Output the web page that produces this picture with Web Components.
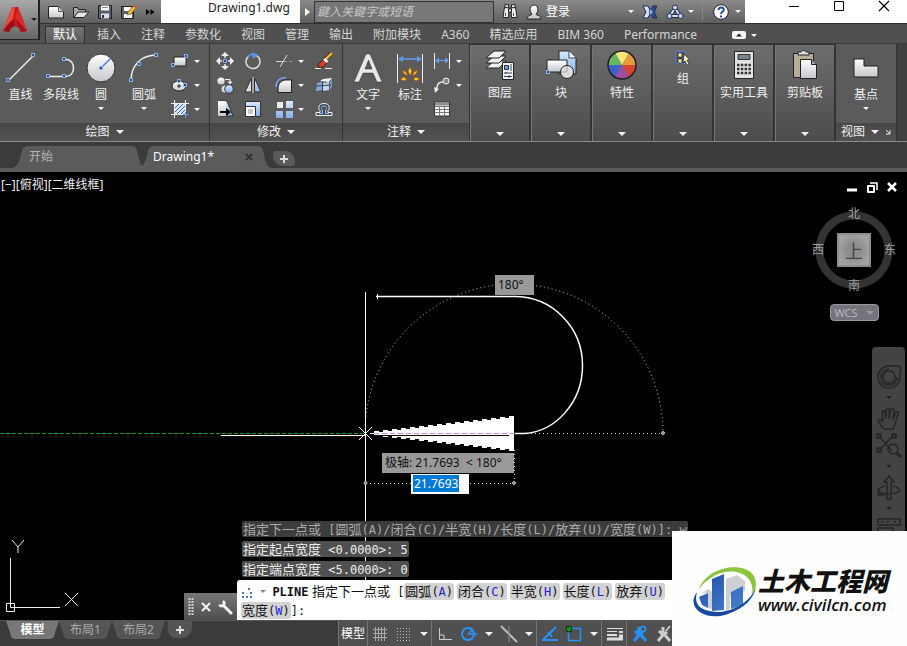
<!DOCTYPE html>
<html lang="zh-CN">
<head>
<meta charset="utf-8">
<title>Drawing1.dwg</title>
<style>
    html {
        height: 100%;
    }

    body {
        margin: 0;
        height: 100%;
        background: #000;
        font: 12px/16px "Noto Sans", "Noto Sans CJK SC", sans-serif;
        color: #e8e8e8;
        overflow: hidden;
    }
</style>
</head>
<body>
<cad-app></cad-app>
<script>
// name: [width, height, markup]
const ICONS = {
    logo: [26, 28, `<path d="M10 1h6l9 24-6 1-2-4-4-2-4 2-2 4-6-1z" fill="#c4161c"/><path d="M10 1h3l-2 12-6 6-4 6z" fill="#ea4b40"/><path d="m1 25 10-12 2 7-4 2-2 4z" fill="#9a1016"/><path d="m16 1 9 24-8-3-4-10z" fill="#dc2a2a"/><path d="m13 12 4 10 2 4 6-1z" fill="#a31218"/>`],
    fileNew: [18, 14, `<path d="M1.500 1.500h10l5 5v6.500h-15z" fill="url(#w)" stroke="#222"/><path d="M11.500 1.500v5h5" fill="#ccc" stroke="#555"/>`],
    open: [18, 14, `<path d="M1.500 12.500v-10h4l1 2h7v3" fill="#aaa" stroke="#222"/><path d="M2 12.500 6 7h11l-5 5.500z" fill="#dde6ef" stroke="#222"/>`],
    save: [16, 16, `<path d="M1.500 1.500h13v13h-13z" fill="#56616e" stroke="#222"/><path d="M4 1.500h8v5H4z" fill="#fff"/><path d="M4 9.500h8v5H4z" fill="#dde"/><path d="M5 11h2v3H5z" fill="#333"/><path d="M5 3.500h6" stroke="#888"/>`],
    saveAs: [18, 16, `<path d="M1.500 2.500h12v12h-12z" fill="#56616e" stroke="#222"/><path d="M4 3h7v4H4zM4 10h8v4H4z" fill="#fff"/><path d="m7 11 1-3 6-7 3 2-6 7z" fill="#f2b632" stroke="#553" stroke-width=".7"/><path d="m14 1 3 2-1 1.500-3-2z" fill="#d55"/>`],
    more: [10, 8, `<path d="M1 1l4 3-4 3zM5.500 1l4 3-4 3z" fill="#000"/>`],
    binocular: [16, 15, `<g fill="#eee" stroke="#222"><path d="M2.500 3 1 13.500h5.500L7 3zM9 3l.500 10.500H15L13.500 3z"/><path d="M3 .7h3.500v3H3zM9.500.7H13v3H9.500zM6.500 5h3v3h-3z"/></g><path d="M3.500 9v3M11.500 9v3" stroke="#555"/>`],
    user: [16, 16, `<path d="M1 15c0-3 2.500-3.500 5-4.500C3 7 3.500 1 8 1s5 6 2 9.500c2.500 1 5 1.500 5 4.500z" fill="url(#w)" stroke="#222"/>`],
    exchange: [16, 14, `<path d="M1 1h5l3 6-3 6H1l3-6z" fill="#d7e3f2" stroke="#1d2b4b"/><path d="M15 1h-4L7 7l4 6h4l-3-6z" fill="#244c9b" stroke="#1d2b4b"/><path d="m9 4 2 3-2 3-2-3z" fill="#7fa7df"/>`],
    a360: [18, 16, `<path d="M9 4 4 12h10z" fill="none" stroke="#1d2b4b" stroke-width="4"/><path d="M9 4 4 12h10z" fill="none" stroke="#dbe6f5" stroke-width="2"/><g fill="#c4d6ee" stroke="#1d2b4b"><circle cx="9" cy="3.500" r="2.500"/><circle cx="3.500" cy="12" r="2.500"/><circle cx="14.500" cy="12" r="2.500"/></g>`],
    help: [16, 16, `<circle cx="8" cy="8" r="7.300" fill="#fff" stroke="#223"/><path d="M5.500 6c0-3.500 5.500-3.300 5.300-.2C10.700 7.800 8 7.800 8 10M8 11.500v2" fill="none" stroke="#1f4f9c" stroke-width="2"/>`],
    minimize: [12, 12, `<path d="M1 6.500h10" stroke="#000"/>`],
    maximize: [12, 12, `<path d="M1.500 1.500h9v9h-9z" fill="none" stroke="#000"/>`],
    close: [12, 12, `<path d="m1 1 10 10M11 1 1 11" stroke="#000" stroke-width="1.200"/>`],
    collapse: [14, 8, `<rect width="14" height="8" rx="2" fill="#f4f4f4"/><path d="m4 5.500 3-3 3 3z" fill="#222"/>`],
    line: [30, 30, `<path d="M2 28 28 2" stroke="#eee" stroke-width="1.500"/>${grip(2, 27)}${grip(27, 2)}`],
    polyline: [32, 24, `<path d="M3 20.500h18c10 0 10-17 0-17h-3" fill="none" stroke="#eee" stroke-width="1.500"/>${grip(3, 20)}${grip(19, 20)}${grip(19, 3)}`],
    circle: [30, 30, `<circle cx="15" cy="15" r="14" fill="url(#w)" stroke="#333"/><path d="m15 15 10-10" stroke="#3d78d8" stroke-width="1.300"/>${grip(15, 15)}`],
    arc: [32, 32, `<path d="M3 29C3 13 13 3 29 3" fill="none" stroke="#eee" stroke-width="1.500"/>${grip(3, 28)}${grip(11, 12)}${grip(28, 3)}`],
    rect: [18, 14, `<path d="M3 3h12v9H3z" fill="url(#w)" stroke="#222"/>${grip(2, 11)}${grip(15, 2)}`],
    ellipse: [18, 14, `<ellipse cx="8" cy="8" rx="7" ry="5" fill="url(#w)" stroke="#222"/>${grip(8, 3)}${grip(14, 7)}<path d="M6 8h4M8 6v4" stroke="#222"/>`],
    hatch: [18, 18, `<path d="M4 4h10v10H4z" fill="#d8e5f5"/><path d="m4 8 4-4M4 12l8-8M6 14l8-8M10 14l4-4" stroke="#3c5f94"/><path d="M3.500 0v18M14.500 0v18M0 3.500h18M0 14.500h18" stroke="#eee"/><path d="M14.500 12v6M12 14.500h6" stroke="#5b9bff"/>`],
    move: [18, 18, `<path d="M9 2v14M2 9h14" stroke="#eee" stroke-width="1.500"/><path d="M9 0l4 4H5zM9 18l4-4H5zM0 9l4-4v8zM18 9l-4-4v8z" fill="#eee"/><path d="M6 6h6v6H6z" fill="#555"/>${grip(9, 9)}`],
    rotate: [18, 18, `<path d="M12.500 3.500A7 7 0 1 1 5 3.800" fill="none" stroke="#ddd" stroke-width="1.500"/><path d="M4 5C5.500 2.500 8 2 10 3" fill="none" stroke="#5b94e8" stroke-width="1.500"/><path d="m8 0 6 3-5 4z" fill="#5b94e8"/>`],
    trim: [18, 14, `<path d="M1 7.500h7" stroke="#ddd"/><path d="M9 7.500h8" stroke="#6ca0ee" stroke-dasharray="3 2"/><path d="M12 1 5 13" stroke="#ddd"/>`],
    erase: [18, 18, `<path d="m17 1-8 8" stroke="#222" stroke-width="4"/><path d="m17 1-8 8" stroke="#f6b33c" stroke-width="2.500"/><path d="m8 8 4 3-4 4-4 .5-1-3z" fill="#d83b2c" stroke="#421"/><path d="m10 6-2 2 3.500 3 2-2z" fill="#eee"/><path d="M0 16.500h6M10 16.500h7" stroke="#eee"/>`],
    copy: [18, 18, `<circle cx="5" cy="5" r="3.600" fill="url(#w)"/><circle cx="9" cy="13" r="3.500" fill="#ddd"/><circle cx="13" cy="13" r="4.300" fill="url(#b)" stroke="#333"/><path d="M9 3.500h5v4" fill="none" stroke="#eee"/><path d="M11.500 5.500h5l-2.500 3z" fill="#eee"/>`],
    mirror: [18, 18, `<path d="M7.500 2v14H1z" fill="#ddd" stroke="#333"/><path d="M10.500 2v14H17z" fill="url(#b)" stroke="#333"/><path d="M9 1v16" stroke="#eee"/>`],
    fillet: [18, 18, `<path d="M3 16.500V12C3 7 7 4 11 4h5.500v12.500z" fill="url(#w)" stroke="#222"/><path d="M1 11C1 5 5 1.500 11 1.500" fill="none" stroke="#75aaff" stroke-width="1.500"/>`],
    explode: [18, 16, `<path d="m2 6 5-1v8l-6 1z" fill="#86a9d8"/><path d="m5 4 3-2 9-1-3 4z" fill="#edf4ff"/><path d="m8 6 6-1v8l-6 1z" fill="#c0d5ee"/><path d="m15 5 2-3v8l-2 3z" fill="#6f97cb"/><path d="M7.500 5v10M1 9l15-1" stroke="#34465e"/>`],
    stretch: [18, 18, `<path d="M3 1h8l6 15H3z" fill="url(#b)" stroke="#333"/><path d="M2 1h8v15H2z" fill="url(#w)"/><path d="M4 12h8" stroke="#000" stroke-width="2"/><path d="m10 8 5 4-5 4z" fill="#000"/>`],
    scale: [18, 18, `<path d="M1.500 1.500h15v15h-15z" fill="url(#b)" stroke="#333"/><path d="M1.500 6.500h10v10h-10z" fill="#fff" stroke="#333"/><path d="M4 9h5v5H4z" fill="#c8c8c8"/>`],
    array: [18, 18, `<path d="M2 2h6v6H2z" fill="#eee"/><path d="M11 1h7v7h-7zM1 11h7v7H1zM11 11h7v7h-7z" fill="url(#b)"/>`],
    offset: [18, 16, `<path d="M1 14.500h16v-3h-4v-2c2-2 2-7-4-7s-6 5-4 7v2H1z" fill="#47505c" stroke="#edf3ff"/><path d="M4 12.500h3.500V9C6 8 6 5 9 5s3 3 1.500 4v3.500H14" fill="none" stroke="#8db9f8"/>`],
    text: [28, 30, `<path d="M0 29 12 1h4l12 28h-5l-4-9H9l-4 9zm11-13h7L14.500 7z" fill="#e8e8e8" stroke="#333" stroke-width=".5"/>`],
    dimension: [28, 30, `<path d="M1.500 1v29M26.500 1v29" stroke="#eee"/><path d="M3 6h22" stroke="#5f9cf0" stroke-width="1.500"/><path d="m2 6 5-3v6zM26 6l-5-3v6z" fill="#5f9cf0"/><g fill="#f8c829" stroke="#a8400c" stroke-width=".6"><path d="m14 14 2 4-2 5-2-5zM6 17l4 2 2 4-4-2zM22 17l-4 2-2 4 4-2zM4 26l4-2 3 2-3 2zM24 26l-4-2-3 2 3 2z"/></g>`],
    linearDim: [18, 16, `<path d="M1.500 0v16M16.500 0v16" stroke="#eee"/><path d="M3 7.500h12" stroke="#65a0f5"/><path d="m2 7.500 4-3v6zM16 7.500l-4-3v6z" fill="#65a0f5"/>`],
    leader: [18, 16, `<circle cx="13" cy="4" r="3" fill="#888" stroke="#eee"/><path d="M10 5C5 5 5 7 3 13" fill="none" stroke="#eee" stroke-width="1.500"/><path d="M1 10l1 6 4-4z" fill="#eee"/>`],
    table: [16, 16, `<path d="M.5 1h15v14H.5z" fill="#f4f4f4" stroke="#333"/><path d="M1 1.500h14v3H1z" fill="#8f8f8f"/><path d="M.5 5.500h15M.5 8.500h15M.5 11.500h15M5.500 5v10M10.500 5v10" stroke="#777"/>`],
    layers: [30, 30, `<g fill="#f2f2f2" stroke="#222"><path d="m1 18 8-7h12l-7 7z"/><path d="m1 13 8-7h12l-7 7z"/><path d="m1 8 8-7h12l-7 7z"/></g><path d="M17.500 12.500h11v17h-11z" fill="#f4f4f4" stroke="#222"/><path d="M19.500 15.500h4v4h-4z" fill="#69a0ee" stroke="#234"/><path d="M26 14v7M19 23h8M19 26.500h8M21 22v2M24 25v3" stroke="#345"/>`],
    block: [32, 30, `<path d="M14 1h10l7 7v16H14z" fill="url(#b)" stroke="#222"/><path d="M24 1v7h7" fill="#fff" stroke="#246"/><path d="M2 10h20v12H2z" fill="url(#w)" stroke="#222"/><circle cx="22" cy="22" r="6.500" fill="#ddd" stroke="#222"/><path d="M22 16v6h-6" fill="none" stroke="#aaa"/>${grip(3, 22)}`],
    properties: [30, 30, `<g transform="translate(15 15)"><path d="M0 0-7-12A14 14 0 0 1 7-12z" fill="#f5e77c"/><path d="M0 0 7-12A14 14 0 0 1 14 0z" fill="#e79a3a"/><path d="M0 0H14A14 14 0 0 1 7 12z" fill="#d64436"/><path d="M0 0 7 12A14 14 0 0 1-7 12z" fill="#9c4fa2"/><path d="M0 0-7 12A14 14 0 0 1-14 0z" fill="#3f62c9"/><path d="M0 0H-14A14 14 0 0 1-7-12z" fill="#67b862"/><circle r="14" fill="none" stroke="#222" stroke-width="1.500"/></g>`],
    group: [16, 16, `<path d="M1 1.500h9v12H1z" fill="#454c66" stroke="#5b8cff" stroke-dasharray="2 1"/><path d="M3 3h4v4H3zM3 9h4v4H3z" fill="#e7e98c" stroke="#333" stroke-width=".7"/><path d="m9 4 6 6h-3l2 4-2 1-2-4-2 2z" fill="#f5f5c8" stroke="#222" stroke-width=".7"/>`],
    calculator: [22, 30, `<path d="M1.500 1.500h19v27h-19z" fill="#e3e3e3" stroke="#222"/><path d="M5 4.500h12v5H5z" fill="#7a8590" stroke="#333"/><path d="M4 15h14M4 19h14M4 23h14" stroke="#333" stroke-width="2.500" stroke-dasharray="2.500 1.300"/>`],
    clipboard: [26, 30, `<path d="M1.500 3.500h20v24h-20z" fill="#b9ad98" stroke="#222"/><path d="M6 5V2h3c1-2 4-2 5 0h3v3z" fill="#ddd" stroke="#222"/><path d="M8.500 9.500h11l5 5v14h-16z" fill="url(#w)" stroke="#222"/><path d="M19.500 9.500v5h5" fill="#aaa" stroke="#222"/>`],
    base: [26, 20, `<path d="M1 1h10v7h14v11H1z" fill="url(#w)" stroke="#222"/>`],
    launcher: [6, 6, `<path d="m1 1 4 4M5 1v4H1" fill="none" stroke="#eee"/>`],
    tabClose: [8, 8, `<path d="m1 1 6 6M7 1 1 7" stroke="#333" stroke-width="2"/>`],
    plus: [8, 8, `<path d="M4 0v8M0 4h8" stroke="#ddd" stroke-width="2"/>`],
    winMin: [12, 12, `<path d="M1 9h10" stroke="#fff" stroke-width="3"/>`],
    winRestore: [12, 12, `<path d="M4 2h7v7" fill="none" stroke="#fff" stroke-width="1.500"/><path d="M2 5h6v6H2z" fill="none" stroke="#fff" stroke-width="2"/>`],
    winClose: [12, 12, `<path d="m2 2 8 8M10 2l-8 8" stroke="#fff" stroke-width="2.500"/>`],
    wheel: [26, 26, `<circle cx="13" cy="13" r="6"/><path d="M13 2h9c3 0 3 3 2 6v5a11 11 0 1 1-11-11z"/><path d="M13 5a8 8 0 1 0 8 8"/>`],
    hand: [26, 26, `<path d="M8 23c-2-4-6-6-6-9 2-2 4 1 5 2L6 6c1-2 3-1 3 1l1 5V4c1-2 3-2 3 0v8l2-9c1-1 3-1 3 1l-1 9 3-7c2-1 3 0 2 2l-3 10-2 5z"/>`],
    zoom: [26, 26, `<path d="m3 3 13 15M18 2 3 17M1 1h4v4H1zM16 1h4v4h-4zM1 15h4v4H1z"/><circle cx="17" cy="16" r="5"/><path d="m21 20 4 4" stroke-width="3"/>`],
    orbit: [26, 26, `<path d="M11 24V7H8l5-6 5 6h-3v17zM9 11C-2 14 0 19 12 19s16-5 5-8M4 15l-2 5 6 0"/>`],
    motion: [26, 16, `<path d="M2 2h22v6H2zM5 5h2M11 5h2M18 5h2M2 16v-5h15v5"/>`],
    drag: [6, 18, `<path d="M1.500 0v18M4.500 0v18" stroke="#ccc" stroke-width="2" stroke-dasharray="2 1"/>`],
    cmdClose: [12, 12, `<path d="m2 2 8 8M10 2l-8 8" stroke="#f4f4f4" stroke-width="2"/>`],
    wrench: [16, 16, `<path d="m6 6 8 8" stroke="#f4f4f4" stroke-width="3" stroke-linecap="round"/><path d="M2 6c4 3 7-1 4-4" fill="none" stroke="#f4f4f4" stroke-width="2.500"/>`],
    prompt: [12, 12, `<path d="M7 1h2v2H7zM1 5h2v2H1zM9 5h2v2H9zM1 9h2v2H1zM5 9h2v2H5zM9 9h2v2H9z" fill="#4c74ae"/>`],
    grid: [16, 16, `<path d="M3.500 1v14M6.500 1v14M9.500 1v14M12.500 1v14M1 3.500h14M1 7.500h14M1 11.500h14" stroke="#aaa"/>`],
    snap: [16, 16, `<path d="M1 2.500h14M1 5.500h14M1 8.500h14M1 11.500h14M1 14.500h14" stroke="#bbb" stroke-dasharray="1 2"/>`],
    ortho: [16, 16, `<path d="M2.500 2v11.500H15M3 9h4v4" fill="none" stroke="#ccc"/>`],
    polar: [18, 16, `<circle cx="8" cy="8" r="6" fill="none" stroke="#2793ff" stroke-width="2"/><path d="M8 8h9M8 8l4-4" stroke="#2793ff" stroke-width="1.500"/>`],
    iso: [18, 18, `<path d="M1 1 17 17" stroke="#bbb" stroke-width="2"/><path d="M9 1v16" stroke="#888"/>`],
    track: [18, 16, `<path d="M15 1 2 14h15" fill="none" stroke="#2793ff" stroke-width="2"/><path d="M7 6l4 5" stroke="#2793ff" stroke-width="2"/>`],
    osnap: [18, 18, `<path d="M3.500 3.500h12v12h-12z" fill="none" stroke="#2793ff" stroke-width="1.500"/><circle cx="4" cy="4" r="3" fill="#128b22" stroke="#082d0c"/>`],
    weight: [18, 14, `<path d="M1 1.500h16M1 4.500h10" stroke="#ddd"/><path d="M13 5h4M1 8h10" stroke="#ddd" stroke-width="2"/><path d="M13 9h4M1 12h16" stroke="#ddd" stroke-width="3"/>`],
    annoOn: [16, 18, `<path d="M7 2v8l-5 6M8 9l6 7M3 6l4 4 4-3" fill="none" stroke="#2793ff" stroke-width="3"/><circle cx="11" cy="4" r="2.500" fill="none" stroke="#2793ff" stroke-width="1.500"/>`],
    annoOff: [16, 18, `<path d="M7 2v8l-5 6M8 9l6 7M3 6l4 4 4-3" fill="none" stroke="#ccc" stroke-width="3"/><path d="m10 6 4-5" stroke="#ccc" stroke-width="2"/>`]
};

// the small square grip that marks a point
function grip(x, y) {
    return `<rect x="${x - 1.5}" y="${y - 1.5}" width="3" height="3" fill="#334a70" stroke="#8db8ff"/>`;
}

class CadIcon extends HTMLElement {
    constructor() {
        super();
        this.attachShadow({ mode: 'open' });
    }

    connectedCallback() {
        const [w, h, markup] = ICONS[this.getAttribute('name')];
        this.shadowRoot.innerHTML = `
        <style>
            :host {
                display: inline-flex;
                flex: none;
            }
        </style>
        <svg width="${w}" height="${h}" viewBox="0 0 ${w} ${h}" aria-hidden="true" fill="none" stroke-linejoin="round">
            <defs>
                <linearGradient id="w" x2="0" y2="1"><stop stop-color="#fff"/><stop offset="1" stop-color="#c4c7cc"/></linearGradient>
                <linearGradient id="b" x2="0" y2="1"><stop stop-color="#d9eaff"/><stop offset="1" stop-color="#83aee6"/></linearGradient>
            </defs>
            ${markup}
        </svg>`;
    }
}
customElements.define('cad-icon', CadIcon);

class DropArrow extends HTMLElement {
    constructor() {
        super();
        this.attachShadow({ mode: 'open' }).innerHTML = `
        <style>
            :host {
                display: inline-block;
                flex: none;
                width: 0;
                border: solid transparent;
                border-width: 3px 3px 0;
                border-top-color: var(--arrow, #f4f4f4);
            }
            :host([large]) {
                border-width: 4px 4px 0;
            }
        </style>`;
    }
}
customElements.define('drop-arrow', DropArrow);

// tool in a ribbon panel: large with a label, or small with an optional arrow
class ToolButton extends HTMLElement {
    constructor() {
        super();
        this.attachShadow({ mode: 'open' });
    }

    connectedCallback() {
        const label = this.getAttribute('label');
        const small = this.hasAttribute('small');
        this.shadowRoot.innerHTML = `
        <style>
            :host {
                display: flex;
                justify-content: center;
            }
            button {
                display: flex;
                align-items: center;
                border: 0;
                padding: 0;
                background: none;
                color: #f0f0f0;
                font: inherit;
                white-space: nowrap;
            }
            .large {
                flex-direction: column;
            }
            .large .icon {
                height: 38px;
            }
            .large drop-arrow {
                margin-top: 4px;
            }
            .small {
                height: 24px;
            }
            .icon {
                display: flex;
                align-items: center;
                justify-content: center;
                min-width: 22px;
            }
            .arrow {
                display: flex;
                justify-content: center;
                width: 12px;
            }
        </style>
        <button type="button" class="${small ? 'small' : 'large'}" ${small ? `aria-label="${label}"` : ''}>
            <span class="icon"><cad-icon name="${this.getAttribute('icon')}"></cad-icon></span>
            ${small ? '' : `<span>${label}</span>`}
            ${this.hasAttribute('drop') ? '<span class="arrow"><drop-arrow></drop-arrow></span>' : ''}
        </button>`;
    }
}
customElements.define('tool-button', ToolButton);

class RibbonPanel extends HTMLElement {
    constructor() {
        super();
        this.attachShadow({ mode: 'open' });
    }

    connectedCallback() {
        this.shadowRoot.innerHTML = `
        <style>
            :host {
                display: flex;
                flex-direction: column;
                box-sizing: border-box;
                border-right: 1px solid #333;
                background: #5b5b5b;
            }
            .tools {
                flex: 1;
                display: grid;
                grid-template-columns: var(--columns);
                align-content: start;
                padding: 5px 0 0;
            }
            button {
                display: flex;
                align-items: center;
                justify-content: center;
                gap: 6px;
                height: 18px;
                border: 0;
                padding: 0;
                background: linear-gradient(#474747, #525252);
                color: #f0f0f0;
                font: inherit;
            }
        </style>
        <div class="tools"><slot></slot></div>
        <button type="button">${this.getAttribute('label')} <drop-arrow large></drop-arrow>
            ${this.hasAttribute('launcher') ? '<cad-icon name="launcher"></cad-icon>' : ''}
        </button>`;
    }
}
customElements.define('ribbon-panel', RibbonPanel);

// panel folded to a single button
class FoldedPanel extends HTMLElement {
    constructor() {
        super();
        this.attachShadow({ mode: 'open' });
    }

    connectedCallback() {
        this.shadowRoot.innerHTML = `
        <style>
            :host {
                display: flex;
                width: 61px;
                box-sizing: border-box;
                border: solid #333;
                border-width: 1px 2px 0 0;
            }
            button {
                flex: 1;
                display: flex;
                flex-direction: column;
                align-items: center;
                gap: 5px;
                border: 1px solid #777;
                border-width: 0 0 0 1px;
                padding: 5px 0;
                background: linear-gradient(#6d6d6d, #4c4c4c);
                color: #f0f0f0;
                font: inherit;
                white-space: nowrap;
            }
            drop-arrow {
                margin-top: auto;
            }
        </style>
        <button type="button">
            <cad-icon name="${this.getAttribute('icon')}"></cad-icon>
            <span>${this.getAttribute('label')}</span>
            <drop-arrow large></drop-arrow>
        </button>`;
    }
}
customElements.define('folded-panel', FoldedPanel);

class TitleBar extends HTMLElement {
    constructor() {
        super();
        this.attachShadow({ mode: 'open' }).innerHTML = `
        <style>
            :host {
                display: flex;
                height: 23px;
                background: #fff;
            }
            button {
                display: flex;
                align-items: center;
                gap: 4px;
                border: 0;
                padding: 0;
                background: none;
                font: inherit;
                color: #fff;
            }
            .quick, .info {
                display: flex;
                align-items: center;
                background: linear-gradient(#8a8a8a, #5f5f5f);
            }
            .quick {
                flex: none;
                gap: 7px;
                width: 114px;
                padding-left: 7px;
            }
            .title {
                flex: none;
                width: 92px;
                padding-left: 47px;
                color: #222;
                white-space: nowrap;
            }
            .info {
                flex: 1;
                min-width: 0;
                gap: 8px;
            }
            .play {
                width: 14px;
                justify-content: center;
            }
            .play::before {
                content: "";
                border: solid transparent;
                border-width: 4px 0 4px 5px;
                border-left-color: #fff;
            }
            .play + input {
                margin-left: -8px;
            }
            input {
                flex: 1;
                min-width: 0;
                height: 22px;
                box-sizing: border-box;
                border: 1px solid #333;
                padding: 0 2px;
                background: #777;
                font: italic 12px/16px "Noto Sans", "Noto Sans CJK SC", sans-serif;
            }
            input::placeholder {
                color: #c8c8c8;
            }
            .login {
                width: 108px;
            }
            .login drop-arrow {
                margin-left: auto;
            }
            .help {
                border-left: 1px solid #888;
                padding: 0 4px 0 10px;
                gap: 6px;
            }
            .window {
                flex: none;
                display: flex;
                align-items: start;
                gap: 33px;
                width: 119px;
                padding-left: 43px;
            }
        </style>
        <div class="quick">
            <button aria-label="新建"><cad-icon name="fileNew"></cad-icon></button>
            <button aria-label="打开"><cad-icon name="open"></cad-icon></button>
            <button aria-label="保存"><cad-icon name="save"></cad-icon></button>
            <button aria-label="另存为"><cad-icon name="saveAs"></cad-icon></button>
            <button aria-label="更多"><cad-icon name="more"></cad-icon></button>
        </div>
        <div class="title">Drawing1.dwg</div>
        <div class="info">
            <button class="play" aria-label="搜索历史"></button>
            <input type="search" placeholder="鍵入关鍵字或短语" aria-label="搜索">
            <button aria-label="搜索"><cad-icon name="binocular"></cad-icon></button>
            <button class="login"><cad-icon name="user"></cad-icon> 登录 <drop-arrow></drop-arrow></button>
            <button aria-label="Exchange"><cad-icon name="exchange"></cad-icon></button>
            <button aria-label="A360"><cad-icon name="a360"></cad-icon><drop-arrow></drop-arrow></button>
            <button class="help" aria-label="帮助"><cad-icon name="help"></cad-icon><drop-arrow></drop-arrow></button>
        </div>
        <div class="window">
            <button aria-label="最小化"><cad-icon name="minimize"></cad-icon></button>
            <button aria-label="最大化"><cad-icon name="maximize"></cad-icon></button>
            <button aria-label="关闭"><cad-icon name="close"></cad-icon></button>
        </div>`;
    }
}
customElements.define('title-bar', TitleBar);

class RibbonTabs extends HTMLElement {
    constructor() {
        super();
        const tabs = ['默认', '插入', '注释', '参数化', '视图', '管理', '输出', '附加模块', 'A360', '精选应用', 'BIM 360', 'Performance'];
        this.attachShadow({ mode: 'open' }).innerHTML = `
        <style>
            :host {
                display: flex;
                gap: 4px;
                height: 20px;
                box-sizing: border-box;
                padding: 2px 0 0 5px;
                border-top: 1px solid #333;
                background: #505050;
            }
            button {
                flex: none;
                border: 1px solid transparent;
                border-bottom: 0;
                padding: 0 7px;
                background: none;
                color: #d4d4d4;
                font: inherit;
                white-space: nowrap;
            }
            button[aria-selected=true] {
                border-color: #2c2c2c;
                background: linear-gradient(#747474, #5b5b5b);
                color: #fff;
            }
            .view {
                display: flex;
                align-items: center;
                gap: 5px;
                padding: 0 22px;
            }
        </style>
        ${tabs.map((t, i) => `<button role="tab" aria-selected="${i === 0}">${t}</button>`).join('')}
        <button class="view" aria-label="最小化功能区"><cad-icon name="collapse"></cad-icon><drop-arrow></drop-arrow></button>`;
    }
}
customElements.define('ribbon-tabs', RibbonTabs);

class CadRibbon extends HTMLElement {
    constructor() {
        super();
        this.attachShadow({ mode: 'open' }).innerHTML = `
        <style>
            :host {
                display: flex;
                height: 98px;
                background: #404040;
                border-top: 1px solid #3a3a3a;
                box-sizing: border-box;
            }
            ribbon-panel {
                flex: none;
            }
            .draw {
                width: 210px;
                --columns: 41px 40px 40px 46px 34px;
            }
            .modify {
                width: 133px;
                --columns: 29px 28px 46px 22px;
            }
            .note {
                width: 127px;
                --columns: 50px 34px 39px;
            }
            .base {
                width: 61px;
                --columns: 1fr;
            }
            .stack {
                display: grid;
                justify-items: start;
            }
            .draw .stack {
                padding-left: 2px;
            }
            .note .stack {
                padding-left: 4px;
            }
        </style>
        <ribbon-panel class="draw" label="绘图">
            <tool-button icon="line" label="直线"></tool-button>
            <tool-button icon="polyline" label="多段线"></tool-button>
            <tool-button icon="circle" label="圆" drop></tool-button>
            <tool-button icon="arc" label="圆弧" drop></tool-button>
            <div class="stack">
                <tool-button small icon="rect" label="矩形" drop></tool-button>
                <tool-button small icon="ellipse" label="椭圆" drop></tool-button>
                <tool-button small icon="hatch" label="图案填充" drop></tool-button>
            </div>
        </ribbon-panel>
        <ribbon-panel class="modify" label="修改">
            <tool-button small icon="move" label="移动"></tool-button>
            <tool-button small icon="rotate" label="旋转"></tool-button>
            <tool-button small icon="trim" label="修剪" drop></tool-button>
            <tool-button small icon="erase" label="删除"></tool-button>
            <tool-button small icon="copy" label="复制"></tool-button>
            <tool-button small icon="mirror" label="镜像"></tool-button>
            <tool-button small icon="fillet" label="圆角" drop></tool-button>
            <tool-button small icon="explode" label="分解"></tool-button>
            <tool-button small icon="stretch" label="拉伸"></tool-button>
            <tool-button small icon="scale" label="缩放"></tool-button>
            <tool-button small icon="array" label="阵列" drop></tool-button>
            <tool-button small icon="offset" label="偏移"></tool-button>
        </ribbon-panel>
        <ribbon-panel class="note" label="注释">
            <tool-button icon="text" label="文字" drop></tool-button>
            <tool-button icon="dimension" label="标注"></tool-button>
            <div class="stack">
                <tool-button small icon="linearDim" label="线性" drop></tool-button>
                <tool-button small icon="leader" label="引线" drop></tool-button>
                <tool-button small icon="table" label="表格"></tool-button>
            </div>
        </ribbon-panel>
        <folded-panel icon="layers" label="图层"></folded-panel>
        <folded-panel icon="block" label="块"></folded-panel>
        <folded-panel icon="properties" label="特性"></folded-panel>
        <folded-panel icon="group" label="组"></folded-panel>
        <folded-panel icon="calculator" label="实用工具"></folded-panel>
        <folded-panel icon="clipboard" label="剪贴板"></folded-panel>
        <ribbon-panel class="base" label="视图" launcher>
            <tool-button icon="base" label="基点" drop></tool-button>
        </ribbon-panel>`;
    }
}
customElements.define('cad-ribbon', CadRibbon);

class FileTabs extends HTMLElement {
    constructor() {
        super();
        const shape = (fill) => `<svg viewBox="0 0 130 23" preserveAspectRatio="none" aria-hidden="true">
            <defs><linearGradient id="g" x2="0" y2="1"><stop stop-color="${fill}"/><stop offset="1" stop-color="#5b5b5b"/></linearGradient></defs>
            <path d="M0 23c5-2 6-6 8-14 1-7 3-9 7-9h101c5 0 6 3 7 9 2 8 2 12 7 14z" fill="url(#g)"/></svg>`;
        this.attachShadow({ mode: 'open' }).innerHTML = `
        <style>
            :host {
                display: flex;
                align-items: end;
                height: 31px;
                box-sizing: border-box;
                padding: 0 0 0 13px;
                border-top: 1px solid #8a8a8a;
                border-bottom: 4px solid #5b5b5b;
                background: #3b3b3b;
            }
            button {
                position: relative;
                display: flex;
                align-items: center;
                height: 22px;
                width: 132px;
                border: 0;
                padding: 0 18px 0 16px;
                margin-right: -6px;
                background: none;
                color: #b4b4b4;
                font: inherit;
            }
            button[aria-selected=true] {
                color: #fff;
                padding-left: 14px;
            }
            svg {
                position: absolute;
                inset: 0;
                width: 100%;
                height: 100%;
            }
            span, button > cad-icon {
                position: relative;
            }
            button > cad-icon {
                margin-left: auto;
            }
            .add {
                justify-content: center;
                width: 22px;
                height: 15px;
                padding: 0;
                margin: 0 0 2px 8px;
                border-radius: 3px 10px 3px 10px;
                background: #5a5a5a;
            }
            .add > cad-icon {
                margin: 0;
            }
        </style>
        <button role="tab" aria-selected="false">${shape('#5b5b5b')}<span>开始</span></button>
        <button role="tab" aria-selected="true">${shape('#7c7c7c')}<span>Drawing1*</span><cad-icon name="tabClose"></cad-icon></button>
        <button class="add" aria-label="新图形"><cad-icon name="plus"></cad-icon></button>`;
    }
}
customElements.define('file-tabs', FileTabs);

class ViewCube extends HTMLElement {
    constructor() {
        super();
        this.attachShadow({ mode: 'open' }).innerHTML = `
        <style>
            :host {
                display: grid;
                grid-template: 18px 54px 18px / 18px 54px 18px;
                place-items: center;
                color: #a0a0a0;
                background: radial-gradient(circle, transparent 30px, #333 31px, #333 38px, transparent 39px);
            }
            .n { grid-area: 1 / 2; }
            .w { grid-area: 2 / 1; }
            .e { grid-area: 2 / 3; }
            .s { grid-area: 3 / 2; }
            button {
                grid-area: 2 / 2;
                width: 34px;
                height: 34px;
                border: 2px solid #8e8e8e;
                padding: 0;
                background: radial-gradient(#8c8c8c 30%, #a2a2a2 75%);
                color: #444;
                font: 18px/28px "Noto Sans CJK SC", sans-serif;
            }
        </style>
        <span class="n">北</span>
        <span class="w">西</span>
        <button>上</button>
        <span class="e">东</span>
        <span class="s">南</span>`;
    }
}
customElements.define('view-cube', ViewCube);

class NavBar extends HTMLElement {
    constructor() {
        super();
        this.attachShadow({ mode: 'open' }).innerHTML = `
        <style>
            :host {
                display: flex;
                flex-direction: column;
                width: 33px;
                box-sizing: border-box;
                border-radius: 4px 4px 0 0;
                padding-top: 17px;
                background: #434343;
                --arrow: #222;
            }
            button {
                display: flex;
                flex-direction: column;
                align-items: center;
                gap: 6px;
                border: 0;
                padding: 0 0 7px;
                background: none;
            }
            button:first-child {
                padding-bottom: 5px;
                border-bottom: 1px solid #555;
                margin-bottom: 4px;
            }
            .tight {
                padding: 0 0 1px;
            }
            cad-icon {
                stroke: #262626;
                stroke-width: 1.5px;
            }
        </style>
        <button aria-label="导航控制盘"><cad-icon name="wheel"></cad-icon><drop-arrow></drop-arrow></button>
        <button class="tight" aria-label="平移"><cad-icon name="hand"></cad-icon></button>
        <button aria-label="缩放"><cad-icon name="zoom"></cad-icon><drop-arrow></drop-arrow></button>
        <button aria-label="动态观察"><cad-icon name="orbit"></cad-icon><drop-arrow></drop-arrow></button>
        <button aria-label="ShowMotion"><cad-icon name="motion"></cad-icon></button>`;
    }
}
customElements.define('nav-bar', NavBar);

class CommandLine extends HTMLElement {
    constructor() {
        super();
        // ideographs are a size larger than the monospaced latin text
        const mono = (text) => text.replace(/[\x20-\x7e]+/g, (run) => `<i>${run.replace(/</g, '&lt;')}</i>`);
        const chip = (label, key) => `<button>${label}<i>(<b>${key}</b>)</i></button>`;
        const history = ['指定下一点或 [圆弧(A)/闭合(C)/半宽(H)/长度(L)/放弃(U)/宽度(W)]: w', '指定起点宽度 <0.0000>: 5', '指定端点宽度 <5.0000>: 0'];
        this.attachShadow({ mode: 'open' }).innerHTML = `
        <style>
            :host {
                display: grid;
                grid-template-columns: 53px 1fr;
                align-items: end;
                font-size: 13px;
            }
            i {
                font: 12px/16px "DejaVu Sans Mono", monospace;
                white-space: pre;
            }
            ol {
                grid-column: 2;
                display: grid;
                justify-items: start;
                gap: 4px;
                margin: 0 0 3px 5px;
                padding: 0;
                list-style: none;
                white-space: nowrap;
                color: #eee;
            }
            li {
                height: 16px;
                border-radius: 2px;
                padding: 0 1px;
                background: #505050;
            }
            li:first-child {
                color: #aaa;
                background: #3c3c3c;
            }
            .handle {
                display: flex;
                align-items: center;
                justify-content: space-between;
                height: 27px;
                box-sizing: border-box;
                padding: 0 4px;
                background: linear-gradient(#777, #4e4e4e);
            }
            .handle button {
                display: flex;
                border: 0;
                padding: 0;
                background: none;
            }
            .entry {
                height: 40px;
                box-sizing: border-box;
                padding: 2px 4px 0;
                border-radius: 3px 0 0 0;
                background: #fff;
                color: #111;
                line-height: 19px;
                overflow: hidden;
            }
            .entry cad-icon {
                vertical-align: middle;
            }
            .entry drop-arrow {
                --arrow: #888;
                margin: 0 6px 2px 4px;
                vertical-align: middle;
            }
            .entry button {
                border: 0;
                border-radius: 3px;
                padding: 0 1px;
                margin-right: 3px;
                background: #d2d2d2;
                color: #111;
                font: inherit;
                line-height: 16px;
            }
            .entry button:last-of-type {
                margin: 0;
            }
            .entry b {
                color: #2020d8;
                font-weight: normal;
            }
            input {
                width: 40px;
                border: 0;
                padding: 0;
                outline: 0;
                font: 12px/16px "DejaVu Sans Mono", monospace;
            }
        </style>
        <ol>${history.map((line) => `<li>${mono(line)}</li>`).join('')}</ol>
        <div class="handle">
            <cad-icon name="drag"></cad-icon>
            <button aria-label="关闭"><cad-icon name="cmdClose"></cad-icon></button>
            <button aria-label="自定义"><cad-icon name="wrench"></cad-icon></button>
        </div>
        <div class="entry"><cad-icon name="prompt"></cad-icon> <drop-arrow></drop-arrow><i><strong>PLINE</strong></i> 指定下一点或<i> [</i>${chip('圆弧', 'A')}${chip('闭合', 'C')}${chip('半宽', 'H')}${chip('长度', 'L')}${chip('放弃', 'U')}<wbr>${chip('宽度', 'W')}<i>]:</i><input aria-label="命令"></div>`;
    }
}
customElements.define('command-line', CommandLine);

class DrawingArea extends HTMLElement {
    constructor() {
        super();
        this.attachShadow({ mode: 'open' }).innerHTML = `
        <style>
            :host {
                position: relative;
                flex: 1;
                min-height: 0;
                background: #000;
                overflow: hidden;
            }
            svg, .tip, .value, .controls, .side, nav-bar, command-line {
                position: absolute;
            }
            .viewport {
                padding: 5px 1px;
                color: #eee;
            }
            .tip, .value {
                box-sizing: border-box;
                height: 20px;
                padding: 0 3px;
                background: #999;
                color: #111;
                line-height: 20px;
                white-space: pre;
            }
            .value {
                width: 58px;
                border: 0;
                background: #fff linear-gradient(#0078d7, #0078d7) 2px 1px / 46px 17px no-repeat;
                color: #fff;
                font: 12px/20px "Noto Sans", sans-serif;
            }
            .ucs {
                left: 5px;
                bottom: 5px;
            }
            .controls {
                top: 9px;
                right: 9px;
                display: flex;
                gap: 8px;
            }
            .controls button, .wcs {
                display: flex;
                border: 0;
                padding: 0;
                background: none;
            }
            .side {
                top: 33px;
                right: 8px;
                display: grid;
                justify-items: center;
                gap: 9px;
            }
            .side .wcs {
                align-items: center;
                justify-content: space-around;
                width: 49px;
                height: 17px;
                border: 1px solid #999;
                border-radius: 4px;
                background: #74747c;
                color: #b8b8be;
                font: 11px/14px "Noto Sans", sans-serif;
                --arrow: #9a9aa2;
            }
            nav-bar {
                top: 175px;
                right: 2px;
                bottom: 0;
            }
            command-line {
                left: 184px;
                right: 224px;
                bottom: 0;
            }
        </style>
        <svg width="680" height="450" viewBox="0 172 680 450" fill="none" stroke="#fff">
            <g stroke="#ccc" stroke-dasharray="1 3">
                <path d="M365 433A149 149 0 0 1 663 433"/>
                <path d="M515 433.500h148M365.500 433v50M514.500 450v33M366 483.500h148"/>
            </g>
            <path d="M0 433.500h365" stroke="#12a012" stroke-dasharray="4 2"/>
            <path d="${this.wedge()}" fill="#fff" stroke="none"/>
            <path d="M374 433.500h140" stroke="#d68ad6" stroke-dasharray="5 3"/>
            <path d="M376 296.500h138.500c38 0 68 31 68 69 0 37-27 66-58 68h-10" stroke-width="1.500"/>
            <path d="M377.500 294v5M365.500 292v328M221 435.500h144"/>
            <path d="M366 435.500h143" stroke="#000"/>
            <path d="m359 427 13 13M372 427l-13 13"/>
            <g fill="#888" stroke="#bbb"><circle cx="663" cy="433" r="1.500"/><circle cx="365.500" cy="483" r="1.500"/><circle cx="514" cy="483" r="1.500"/></g>
        </svg>
        <svg class="ucs" width="80" height="76" fill="none" stroke="#eee">
            <path d="M5.500 19v49.500H55M1.500 64.500h8v8h-8z"/>
            <path d="m7 1 6 7 6-7M13 8v6M60 54l13 13M73 54 60 67"/>
        </svg>
        <div class="viewport">[−][俯视][二维线框]</div>
        <div class="tip" style="left: 495px; top: 103px; width: 39px">180°</div>
        <div class="tip" style="left: 382px; top: 281px; width: 132px">极轴: 21.7693  &lt; 180°</div>
        <input class="value" style="left: 411px; top: 302px" value="21.7693" aria-label="长度">
        <div class="controls">
            <button aria-label="最小化"><cad-icon name="winMin"></cad-icon></button>
            <button aria-label="还原"><cad-icon name="winRestore"></cad-icon></button>
            <button aria-label="关闭"><cad-icon name="winClose"></cad-icon></button>
        </div>
        <div class="side">
            <view-cube></view-cube>
            <button class="wcs">WCS <drop-arrow large></drop-arrow></button>
        </div>
        <nav-bar></nav-bar>
        <command-line></command-line>`;
    }

    // tapering segment with toothed edges, widening by a pixel every nine
    wedge() {
        let top = 'M370 433';
        let bottom = '';
        for (let i = 0; i < 16; i++) {
            const x = 370 + i * 9;
            const end = Math.min(x + 9, 515);
            top += `L${x} ${432 - i}V${433 - i}H${end - 5}V${431 - i}H${end}`;
            bottom = `L${end} ${436 + i}H${end - 5}V${434 + i}H${x}` + bottom;
        }
        return top + bottom + 'z';
    }
}
customElements.define('drawing-area', DrawingArea);

class StatusBar extends HTMLElement {
    constructor() {
        super();
        this.attachShadow({ mode: 'open' }).innerHTML = `
        <style>
            :host {
                display: flex;
                height: 25px;
                border-top: 1px solid #555;
                background: #3b3b3b;
            }
            button {
                display: flex;
                align-items: center;
                justify-content: center;
                border: 0;
                padding: 0;
                background: none;
                color: #aaa;
                font: inherit;
                white-space: nowrap;
            }
            .layouts {
                display: flex;
                flex: none;
                box-sizing: border-box;
                width: 338px;
                padding-left: 6px;
            }
            .layouts button {
                width: 53px;
                height: 18px;
                background: #555;
                clip-path: polygon(0 0, 100% 0, 94% 50%, 90% 90%, 84% 100%, 16% 100%, 10% 90%, 6% 50%);
            }
            .layouts button.active {
                background: #777;
                color: #fff;
                font-weight: bold;
            }
            .layouts button.add {
                width: 24px;
                height: 17px;
                margin-left: 3px;
                background: #555;
                clip-path: none;
                border-radius: 2px 2px 10px 8px;
            }
            .tools {
                flex: 1;
                display: flex;
                background: #505050;
            }
            .tools button {
                flex: none;
                width: 24px;
            }
            .tools .model {
                width: 30px;
                border: solid #777;
                border-width: 0 1px;
                color: #fff;
            }
            .tools .menu {
                width: 16px;
            }
            .tools .end {
                border-right: 1px solid #777;
                margin-right: 1px;
            }
        </style>
        <div class="layouts">
            <button class="active">模型</button>
            <button>布局1</button>
            <button>布局2</button>
            <button class="add" aria-label="新建布局"><cad-icon name="plus"></cad-icon></button>
        </div>
        <div class="tools">
            <button class="model">模型</button>
            <button aria-label="栅格"><cad-icon name="grid"></cad-icon></button>
            <button aria-label="捕捉"><cad-icon name="snap"></cad-icon></button>
            <button class="menu end" aria-label="捕捉设置"><drop-arrow large></drop-arrow></button>
            <button aria-label="正交"><cad-icon name="ortho"></cad-icon></button>
            <button aria-label="极轴追踪"><cad-icon name="polar"></cad-icon></button>
            <button class="menu" aria-label="极轴设置"><drop-arrow large></drop-arrow></button>
            <button aria-label="等轴测"><cad-icon name="iso"></cad-icon></button>
            <button class="menu end" aria-label="等轴测设置"><drop-arrow large></drop-arrow></button>
            <button aria-label="对象捕捉追踪"><cad-icon name="track"></cad-icon></button>
            <button aria-label="对象捕捉"><cad-icon name="osnap"></cad-icon></button>
            <button class="menu end" aria-label="捕捉点"><drop-arrow large></drop-arrow></button>
            <button class="end" aria-label="线宽"><cad-icon name="weight"></cad-icon></button>
            <button aria-label="注释可见性"><cad-icon name="annoOn"></cad-icon></button>
            <button aria-label="自动缩放"><cad-icon name="annoOff"></cad-icon></button>
        </div>`;
    }
}
customElements.define('status-bar', StatusBar);

class SiteBadge extends HTMLElement {
    constructor() {
        super();
        this.attachShadow({ mode: 'open' }).innerHTML = `
        <style>
            :host {
                position: fixed;
                right: 0;
                bottom: 0;
                display: flex;
                align-items: center;
                box-sizing: border-box;
                width: 235px;
                height: 115px;
                padding: 6px 0 0 20px;
                background: #fefefe;
                color: #111;
            }
            div {
                display: grid;
                gap: 2px;
                white-space: nowrap;
            }
            strong {
                font: italic 900 26px/24px "Liberation Sans", "Noto Sans CJK SC", sans-serif;
            }
            span {
                font: italic 600 17px/18px "Open Sans", sans-serif;
            }
        </style>
        <svg width="66" height="54" viewBox="0 0 66 54">
            <defs><linearGradient id="t" x2="1" y2="1"><stop stop-color="#1c4faa"/><stop offset="1" stop-color="#4b83cd"/></linearGradient></defs>
            <path d="M7 24C16-2 64-6 64 19 64 23 62 27 60 30 65 3 27-3 7 24z" fill="#8cc63f"/>
            <path d="M34 14 45 10 53 16v10l-15 6v12l-4 2z" fill="#ccd0d3"/>
            <path d="m7 32 9-4v15l-6-3zM20 14l12-5v36l-12 1zM39 27l12-6v19l-12 4z" fill="url(#t)"/>
            <path d="m16 28 4 2v14l-4-1zM10 28l6-4 4 3v3l-4-2z" fill="#ccd0d3"/>
            <path d="M5 27C-7 43 14 57 36 49 53 43 62 33 64 22 59 36 43 46 27 47 10 47 1 41 5 27z" fill="#1749a0"/>
        </svg>
        <div><strong>土木工程网</strong><span>www.civilcn.com</span></div>`;
    }
}
customElements.define('site-badge', SiteBadge);

class CadApp extends HTMLElement {
    constructor() {
        super();
        this.attachShadow({ mode: 'open' }).innerHTML = `
        <style>
            :host {
                display: flex;
                flex-direction: column;
                height: 100%;
            }
            header {
                display: grid;
                grid-template-columns: 40px 1fr;
                background: #505050;
            }
            .menu {
                grid-row: 1 / 3;
                display: flex;
                align-items: center;
                justify-content: center;
                gap: 3px;
                height: 40px;
                border: solid #222;
                border-width: 0 2px 1px 0;
                padding: 0;
                background: linear-gradient(#aaa, #666);
                --arrow: #222;
            }
        </style>
        <header>
            <button class="menu" aria-label="应用程序菜单"><cad-icon name="logo"></cad-icon><drop-arrow></drop-arrow></button>
            <title-bar></title-bar>
            <ribbon-tabs></ribbon-tabs>
        </header>
        <cad-ribbon></cad-ribbon>
        <file-tabs></file-tabs>
        <drawing-area></drawing-area>
        <status-bar></status-bar>
        <site-badge></site-badge>`;
    }
}
customElements.define('cad-app', CadApp);
</script>
</body>
</html>
